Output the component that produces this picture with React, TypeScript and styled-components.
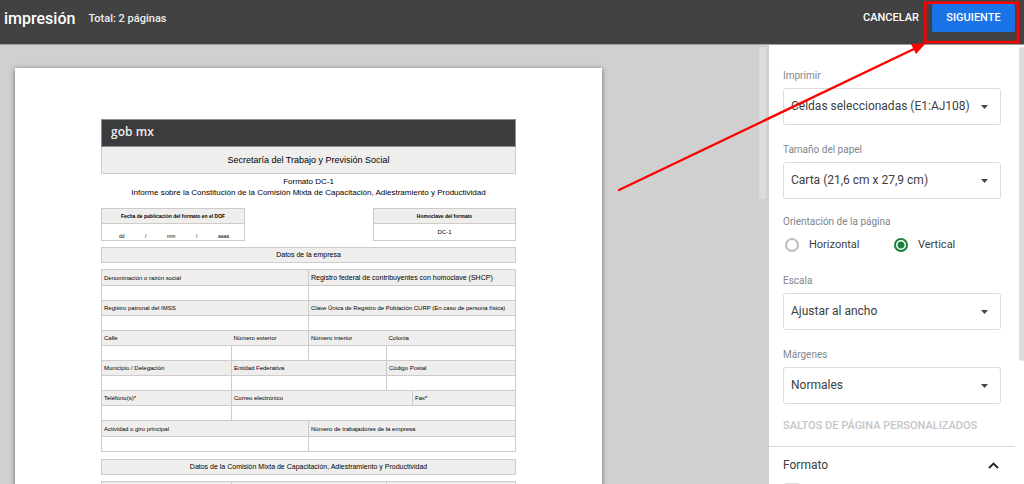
import React, { useId, useState } from "react";
import styled, { createGlobalStyle, css } from "styled-components";

const GlobalStyle = createGlobalStyle`
  *, *::before, *::after { box-sizing: border-box; }
  body { margin: 0; font-family: Roboto, "Liberation Sans", sans-serif; color: #3c4043; }
`;

const Page = styled.div`
  position: relative;
  display: flex;
  flex-direction: column;
  height: 100vh;
  overflow: hidden;
`;

/* ---- top bar ---- */

const TopBar = styled.header`
  display: flex;
  align-items: flex-start;
  flex: none;
  gap: 13px;
  height: 45px;
  padding: 4px 9px 0 4px;
  background: #424242;
  border-bottom: 1px solid #a0a0a0;
  color: #fff;
`;

const Title = styled.h1`
  margin: 0;
  font-size: 16px;
  font-weight: 500;
  line-height: 30px;
`;

const Total = styled.p`
  flex: 1;
  margin: 0;
  font-size: 11px;
  font-weight: 500;
  line-height: 30px;
  color: #eee;
`;

const BarButton = styled.button<{ $primary?: boolean }>`
  height: 28px;
  padding: 0;
  border: 0;
  border-radius: 2px;
  background: none;
  color: #fff;
  font: 500 11px/28px Roboto, "Liberation Sans", sans-serif;
  ${(p) =>
    p.$primary &&
    css`
      width: 83px;
      background: #1a73e8;
    `}
`;

/* ---- layout ---- */

const Body = styled.div`
  display: flex;
  flex: 1;
  min-height: 0;
`;

const Preview = styled.main`
  display: flex;
  flex: 1;
  min-width: 0;
  overflow: hidden;
  background: #d0d0d0;
`;

const Canvas = styled.div`
  flex: 1;
  padding: 23px 15px 0;
`;

const Gutter = styled.div`
  flex: none;
  padding: 2px 3px 0 0;
`;

const Thumb = styled.div<{ $width: number; $height: number }>`
  width: ${(p) => p.$width}px;
  height: ${(p) => p.$height}px;
  border-radius: 3px;
  background: #dadce0;
`;

/* ---- printed sheet ---- */

const Sheet = styled.article`
  width: 587px;
  height: 760px;
  padding: 51px 86px 0;
  background: #fff;
  box-shadow: 0 1px 5px rgba(0, 0, 0, 0.5);
  color: #000;
  font-family: "Liberation Sans", Arial, sans-serif;
`;

const Brand = styled.div`
  height: 28px;
  padding-left: 9px;
  border: 1px solid #8c8c8c;
  background: #3b3c3e;
  color: #eee;
  font: 600 12px/24px "Open Sans", sans-serif;

  span { color: #b3262e; }
`;

const Band = styled.h2<{ $tall?: boolean }>`
  height: ${(p) => (p.$tall ? 27 : 16)}px;
  margin: 0;
  border: 1px solid #ccc;
  border-top-width: ${(p) => (p.$tall ? 0 : 1)}px;
  background: #efeeec;
  font-size: ${(p) => (p.$tall ? 9 : 7)}px;
  font-weight: 400;
  line-height: ${(p) => (p.$tall ? 26 : 14)}px;
  text-align: center;
`;

const FormTitle = styled.p`
  margin: 2px 0 10px;
  font-size: 8px;
  line-height: 11px;
  text-align: center;
`;

const BoxRow = styled.div`
  display: flex;
  justify-content: space-between;
  margin-bottom: 6px;
`;

const Grid = styled.table<{ $width?: number }>`
  width: ${(p) => (p.$width ? p.$width + "px" : "100%")};
  border-collapse: collapse;
  table-layout: fixed;
  font-size: 6px;
  line-height: 8px;
`;

const Row = styled.tr<{ $height?: number }>`
  height: ${(p) => p.$height ?? 15}px;
`;

const Label = styled.th<{ $open?: boolean; $center?: boolean; $large?: boolean }>`
  padding: 0 2px;
  border: 1px solid #ccc;
  ${(p) => p.$open && css`border-right: 0; & + th { border-left: 0; }`}
  background: #efeeec;
  font-weight: ${(p) => (p.$center ? 700 : 400)};
  font-size: ${(p) => (p.$center ? 5 : p.$large ? 7 : 6)}px;
  text-align: ${(p) => (p.$center ? "center" : "left")};
  white-space: nowrap;
`;

const Blank = styled.td`
  padding: 0;
  border: 1px solid #ccc;
  text-align: center;
`;

const DateParts = styled.div`
  display: flex;
  justify-content: space-between;
  margin-top: 8px;
  padding: 0 15px 0 17px;
  font-size: 5px;
  line-height: 7px;
`;

const Section = styled.section`
  margin-bottom: 7px;

  ${Band} { margin-bottom: 6px; }
`;

/* ---- settings panel ---- */

const Panel = styled.aside`
  display: flex;
  flex: none;
  width: 255px;
  background: #fff;
`;

const Settings = styled.form`
  flex: 1;
  padding-top: 23px;
`;

const Fields = styled.div`
  padding: 0 14px 12px;
  border-bottom: 1px solid #dadce0;
`;

const Caption = styled.label`
  display: block;
  padding: 0;
  margin-bottom: 4px;
  color: #80868b;
  font-size: 10px;
  line-height: 16px;
`;

const Field = styled.div`
  & + & { margin-top: 17px; }
`;

const SelectBox = styled.div`
  position: relative;

  svg {
    position: absolute;
    top: 17px;
    right: 13px;
    pointer-events: none;
  }
`;

const Select = styled.select`
  display: block;
  width: 100%;
  height: 37px;
  padding: 0 28px 2px 7px;
  appearance: none;
  border: 1px solid #dadce0;
  border-radius: 3px;
  background: #fff;
  color: #3c4043;
  font: 400 12px/16px Roboto, "Liberation Sans", sans-serif;
`;

const RadioGroup = styled.fieldset`
  margin: 15px 0 20px;
  padding: 0;
  border: 0;
`;

const Options = styled.div`
  display: grid;
  grid-template-columns: 109px 1fr;
  padding: 3px 0 0 2px;
`;

const Option = styled.label`
  display: flex;
  align-items: center;
  gap: 10px;
  font-size: 11px;
  line-height: 16px;
`;

const Radio = styled.input`
  width: 14px;
  height: 14px;
  margin: 0;
  appearance: none;
  border: 2px solid #bdbdbd;
  border-radius: 50%;

  &:checked {
    border-color: #188038;
    background: radial-gradient(circle, #188038 3px, #fff 4px);
  }
`;

const BreaksButton = styled.button`
  display: block;
  margin-top: 13px;
  padding: 0;
  border: 0;
  background: none;
  color: #c4c6c8;
  font: 500 11px/17px Roboto, "Liberation Sans", sans-serif;
`;

const Disclosure = styled.button`
  display: flex;
  align-items: center;
  justify-content: space-between;
  width: 100%;
  height: 36px;
  padding: 0 16px 0 14px;
  border: 0;
  background: none;
  color: #3c4043;
  font: 400 12px/16px Roboto, "Liberation Sans", sans-serif;
`;

const Tick = styled.input`
  display: block;
  width: 16px;
  height: 16px;
  margin: 0 15px;
  appearance: none;
  border: 2px solid #dadce0;
  border-radius: 2px;
`;

const PanelGutter = styled.div`
  padding: 2px 0 0 4px;
`;

/* ---- callout over the page ---- */

const Callout = styled.svg`
  position: absolute;
  top: 0;
  right: 0;
  pointer-events: none;
`;

function SelectField({ label, options }: { label: string; options: string[] }) {
  const id = useId();
  return (
    <Field>
      <Caption htmlFor={id}>{label}</Caption>
      <SelectBox>
        <Select id={id}>
          {options.map((o) => (
            <option key={o}>{o}</option>
          ))}
        </Select>
        <svg width="7" height="4" viewBox="0 0 7 4" aria-hidden="true">
          <path d="M0 0h7L3.5 4z" fill="#444746" />
        </svg>
      </SelectBox>
    </Field>
  );
}

function Columns() {
  return (
    <colgroup>
      <col width="130" />
      <col width="77" />
      <col width="78" />
      <col width="26" />
      <col />
    </colgroup>
  );
}

function FormSheet() {
  return (
    <Sheet>
      <Brand>gob<span>.</span>mx</Brand>
      <Band $tall>Secretaría del Trabajo y Previsión Social</Band>
      <FormTitle>
        Formato DC-1
        <br />
        Informe sobre la Constitución de la Comisión Mixta de Capacitación, Adiestramiento y Productividad
      </FormTitle>
      <BoxRow>
        <Grid $width={144}>
          <tbody>
            <Row><Label $center>Fecha de publicación del formato en el DOF</Label></Row>
            <Row $height={17}>
              <Blank>
                <DateParts>
                  <span>dd</span><span>/</span><span>mm</span><span>/</span><span>aaaa</span>
                </DateParts>
              </Blank>
            </Row>
          </tbody>
        </Grid>
        <Grid $width={143}>
          <tbody>
            <Row><Label $center>Homoclave del formato</Label></Row>
            <Row $height={17}><Blank>DC-1</Blank></Row>
          </tbody>
        </Grid>
      </BoxRow>
      <Section>
        <Band>Datos de la empresa</Band>
        <Grid>
          <Columns />
          <tbody>
            <Row $height={16}>
              <Label colSpan={2}>Denominación o razón social</Label>
              <Label $large colSpan={3}>Registro federal de contribuyentes con homoclave (SHCP)</Label>
            </Row>
            <Row><Blank colSpan={2} /><Blank colSpan={3} /></Row>
            <Row>
              <Label colSpan={2}>Registro patronal del IMSS</Label>
              <Label colSpan={3}>Clave Única de Registro de Población CURP (En caso de persona física)</Label>
            </Row>
            <Row><Blank colSpan={2} /><Blank colSpan={3} /></Row>
            <Row>
              <Label $open>Calle</Label>
              <Label>Número exterior</Label>
              <Label $open>Número interior</Label>
              <Label colSpan={2}>Colonia</Label>
            </Row>
            <Row><Blank /><Blank /><Blank /><Blank colSpan={2} /></Row>
            <Row>
              <Label>Municipio / Delegación</Label>
              <Label colSpan={2}>Entidad Federativa</Label>
              <Label colSpan={2}>Código Postal</Label>
            </Row>
            <Row><Blank /><Blank colSpan={2} /><Blank colSpan={2} /></Row>
            <Row>
              <Label>Teléfono(s)*</Label>
              <Label colSpan={3}>Correo electrónico</Label>
              <Label>Fax*</Label>
            </Row>
            <Row><Blank /><Blank colSpan={4} /></Row>
            <Row $height={16}>
              <Label colSpan={2}>Actividad o giro principal</Label>
              <Label colSpan={3}>Número de trabajadores de la empresa</Label>
            </Row>
            <Row><Blank colSpan={2} /><Blank colSpan={3} /></Row>
          </tbody>
        </Grid>
      </Section>
      <Section>
        <Band>Datos de la Comisión Mixta de Capacitación, Adiestramiento y Productividad</Band>
        <Grid>
          <Columns />
          <tbody>
            <Row><Label /><Label colSpan={2} /><Label colSpan={2} /></Row>
          </tbody>
        </Grid>
      </Section>
    </Sheet>
  );
}

export default function App() {
  const [orientation, setOrientation] = useState("Vertical");
  return (
    <Page>
      <GlobalStyle />
      <TopBar>
        <Title>impresión</Title>
        <Total>Total: 2 páginas</Total>
        <BarButton type="button">CANCELAR</BarButton>
        <BarButton type="button" $primary>SIGUIENTE</BarButton>
      </TopBar>
      <Body>
        <Preview>
          <Canvas><FormSheet /></Canvas>
          <Gutter><Thumb $width={7} $height={152} /></Gutter>
        </Preview>
        <Panel>
          <Settings>
            <Fields>
              <SelectField label="Imprimir" options={["Celdas seleccionadas (E1:AJ108)"]} />
              <SelectField label="Tamaño del papel" options={["Carta (21,6 cm x 27,9 cm)"]} />
              <RadioGroup>
                <Caption as="legend">Orientación de la página</Caption>
                <Options>
                  {["Horizontal", "Vertical"].map((name) => (
                    <Option key={name}>
                      <Radio
                        type="radio"
                        name="orientation"
                        checked={orientation === name}
                        onChange={() => setOrientation(name)}
                      />
                      {name}
                    </Option>
                  ))}
                </Options>
              </RadioGroup>
              <SelectField label="Escala" options={["Ajustar al ancho"]} />
              <SelectField label="Márgenes" options={["Normales"]} />
              <BreaksButton type="button" disabled>SALTOS DE PÁGINA PERSONALIZADOS</BreaksButton>
            </Fields>
            <Disclosure type="button" aria-expanded="true">
              Formato
              <svg width="11" height="7" viewBox="0 0 11 7" aria-hidden="true">
                <path d="M1 6l4.500-4.500L10 6" fill="none" stroke="#202124" strokeWidth="1.800" />
              </svg>
            </Disclosure>
            <Tick type="checkbox" aria-label="Formato" />
          </Settings>
          <PanelGutter><Thumb $width={5} $height={314} /></PanelGutter>
        </Panel>
      </Body>
      <Callout width="410" height="194" viewBox="0 0 410 194" aria-hidden="true">
        <rect x="311.300" y="2.700" width="92.500" height="39.400" fill="none" stroke="#f00" strokeWidth="2.500" />
        <path d="M5 190L302 48" stroke="#f00" strokeWidth="2.300" strokeLinecap="round" />
        <path d="M312 43L297 44L302 54z" fill="#f00" />
      </Callout>
    </Page>
  );
}
